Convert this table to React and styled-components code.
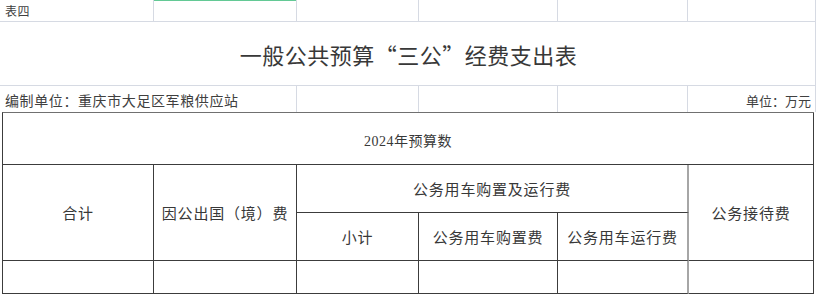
import React from "react";
import styled, { createGlobalStyle } from "styled-components";

const Global = createGlobalStyle`
  html, body { margin: 0; padding: 0; background: #ffffff; }
  body { width: 816px; height: 295px; overflow: hidden; }
`;

const FONT = `"Liberation Serif", "Noto Sans CJK SC", serif`;
const CJK = `"Noto Sans CJK SC", "Liberation Serif", sans-serif`;
const GRID = "#d6dae3";
const INK = "#3a3a3a";

const Page = styled.div`
  width: 816px;
  font-family: ${FONT};
  color: ${INK};
`;

const Sheet = styled.div`
  display: grid;
  grid-template-columns: 154px 143px 122px 139px 130px 128px;
  grid-template-rows: 22px 64px 26px;
`;

const SheetCell = styled.div`
  box-sizing: border-box;
  border-right: ${(p) => (p.$noRight ? "none" : `1px solid ${GRID}`)};
  border-bottom: ${(p) => (p.$noBottom ? "none" : `1px solid ${GRID}`)};
  box-shadow: ${(p) => (p.$selected ? "inset 0 1px 0 #63c995" : "none")};
  grid-column: ${(p) => p.$span || "auto"};
  display: flex;
  align-items: center;
  justify-content: ${(p) => p.$justify || "flex-start"};
  padding: ${(p) => p.$pad || "0"};
  white-space: nowrap;
  overflow: visible;
  font-family: ${CJK};
  font-size: ${(p) => p.$size || "13px"};
  letter-spacing: ${(p) => p.$ls || "0"};
  color: #404040;
`;

const Title = styled.h1`
  margin: 0;
  font-family: ${CJK};
  font-weight: 400;
  font-size: 22px;
  letter-spacing: 0.5px;
  color: #383838;
  padding-left: 2px;
`;

const Table = styled.div`
  margin-left: 2px;
  width: 812px;
  box-sizing: border-box;
  border-left: 1px solid #3c3c3c;
  border-top: 1px solid #707070;
  display: grid;
  grid-template-columns: 151px 143px 122px 139px 131px 125px;
  grid-template-rows: 52px 48px 48px 33px;
`;

const Cell = styled.div`
  box-sizing: border-box;
  border-right: ${(p) => (p.$soft ? "2px solid #a6a6a6" : "1px solid #3c3c3c")};
  border-bottom: 1px solid #3c3c3c;
  grid-column: ${(p) => p.$col || "auto"};
  grid-row: ${(p) => p.$row || "auto"};
  display: flex;
  align-items: center;
  justify-content: center;
  font-family: ${(p) => (p.$digits ? FONT : CJK)};
  font-size: ${(p) => p.$size || "15px"};
  letter-spacing: ${(p) => p.$ls || "0.8px"};
  white-space: nowrap;
  color: #383838;
  padding-top: ${(p) => p.$dy || "0"};
`;

export default function App() {
  return (
    <Page>
      <Global />
      <Sheet>
        <SheetCell $pad="0 0 1px 5px" $size="12px" $ls="0.5px">表四</SheetCell>
        <SheetCell $selected />
        <SheetCell />
        <SheetCell />
        <SheetCell />
        <SheetCell />
        <SheetCell $span="1 / -1" $justify="center">
          <Title>一般公共预算“三公”经费支出表</Title>
        </SheetCell>
        <SheetCell $span="1 / 3" $noBottom $pad="2px 0 0 5px" $size="14px" $ls="0.6px">
          编制单位：重庆市大足区军粮供应站
        </SheetCell>
        <SheetCell $noBottom />
        <SheetCell $noBottom />
        <SheetCell $noBottom />
        <SheetCell $noBottom $justify="flex-end" $pad="2px 4px 0 0" $size="13px">
          单位：万元
        </SheetCell>
      </Sheet>
      <Table>
        <Cell $col="1 / -1" $digits $size="14px" $ls="0.5px" $dy="3px">2024年预算数</Cell>
        <Cell $col="1" $row="2 / 4">合计</Cell>
        <Cell $col="2" $row="2 / 4">因公出国（境）费</Cell>
        <Cell $col="3 / 6" $row="2" $soft>公务用车购置及运行费</Cell>
        <Cell $col="6" $row="2 / 4">公务接待费</Cell>
        <Cell $col="3" $row="3">小计</Cell>
        <Cell $col="4" $row="3">公务用车购置费</Cell>
        <Cell $col="5" $row="3" $soft>公务用车运行费</Cell>
        <Cell $col="1" $row="4" />
        <Cell $col="2" $row="4" />
        <Cell $col="3" $row="4" />
        <Cell $col="4" $row="4" />
        <Cell $col="5" $row="4" $soft />
        <Cell $col="6" $row="4" />
      </Table>
    </Page>
  );
}
